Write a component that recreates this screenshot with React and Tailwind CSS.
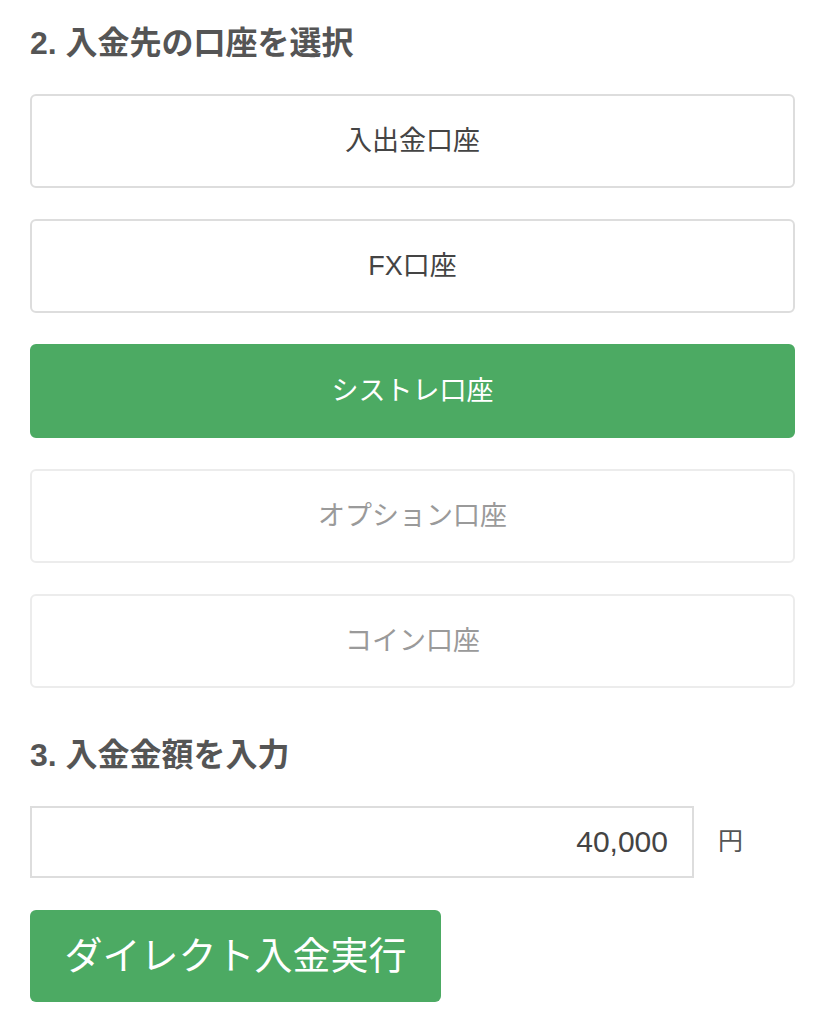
import { useState } from "react";

const accounts = [
  { label: "入出金口座", state: "normal" },
  { label: "FX口座", state: "normal" },
  { label: "シストレ口座", state: "active" },
  { label: "オプション口座", state: "disabled" },
  { label: "コイン口座", state: "disabled" },
];

const App = () => {
  const [amount, setAmount] = useState("40,000");

  const boxClass = (state) => {
    if (state === "active") return "bg-[#4caa63] border-[#4caa63] text-white";
    if (state === "disabled") return "bg-white border-[#ececec] text-[#9a9a9a]";
    return "bg-white border-[#dddddd] text-[#444444]";
  };

  return (
    <div
      className="w-[825px] min-h-[1024px] bg-white px-[30px] pt-[22px]"
      style={{ fontFamily: '"Liberation Sans", "Noto Sans CJK JP", sans-serif' }}
    >
      {/* 口座選択 */}
      <h2 className="text-[32px] leading-[42px] font-bold text-[#555555]">2. 入金先の口座を選択</h2>
      <div className="mt-[30px] flex flex-col gap-[31px]">
        {accounts.map((a) => (
          <button
            key={a.label}
            className={`h-[94px] w-[765px] rounded-[6px] border-2 flex items-center justify-center text-[27px] ${boxClass(a.state)}`}
          >
            {a.label}
          </button>
        ))}
      </div>

      {/* 金額入力 */}
      <h2 className="mt-[46px] text-[32px] leading-[42px] font-bold text-[#555555]">3. 入金金額を入力</h2>
      <div className="mt-[30px] flex items-center">
        <input
          type="text"
          value={amount}
          onChange={(e) => setAmount(e.target.value)}
          className="h-[72px] w-[664px] border-2 border-[#dddddd] px-[24px] text-right text-[30px] text-[#444444] outline-none"
        />
        <span className="ml-[24px] text-[25px] text-[#555555]">円</span>
      </div>

      <button className="mt-[32px] h-[92px] w-[411px] rounded-[6px] bg-[#4caa63] text-[38px] text-white">
        ダイレクト入金実行
      </button>
    </div>
  );
};

export default App;
